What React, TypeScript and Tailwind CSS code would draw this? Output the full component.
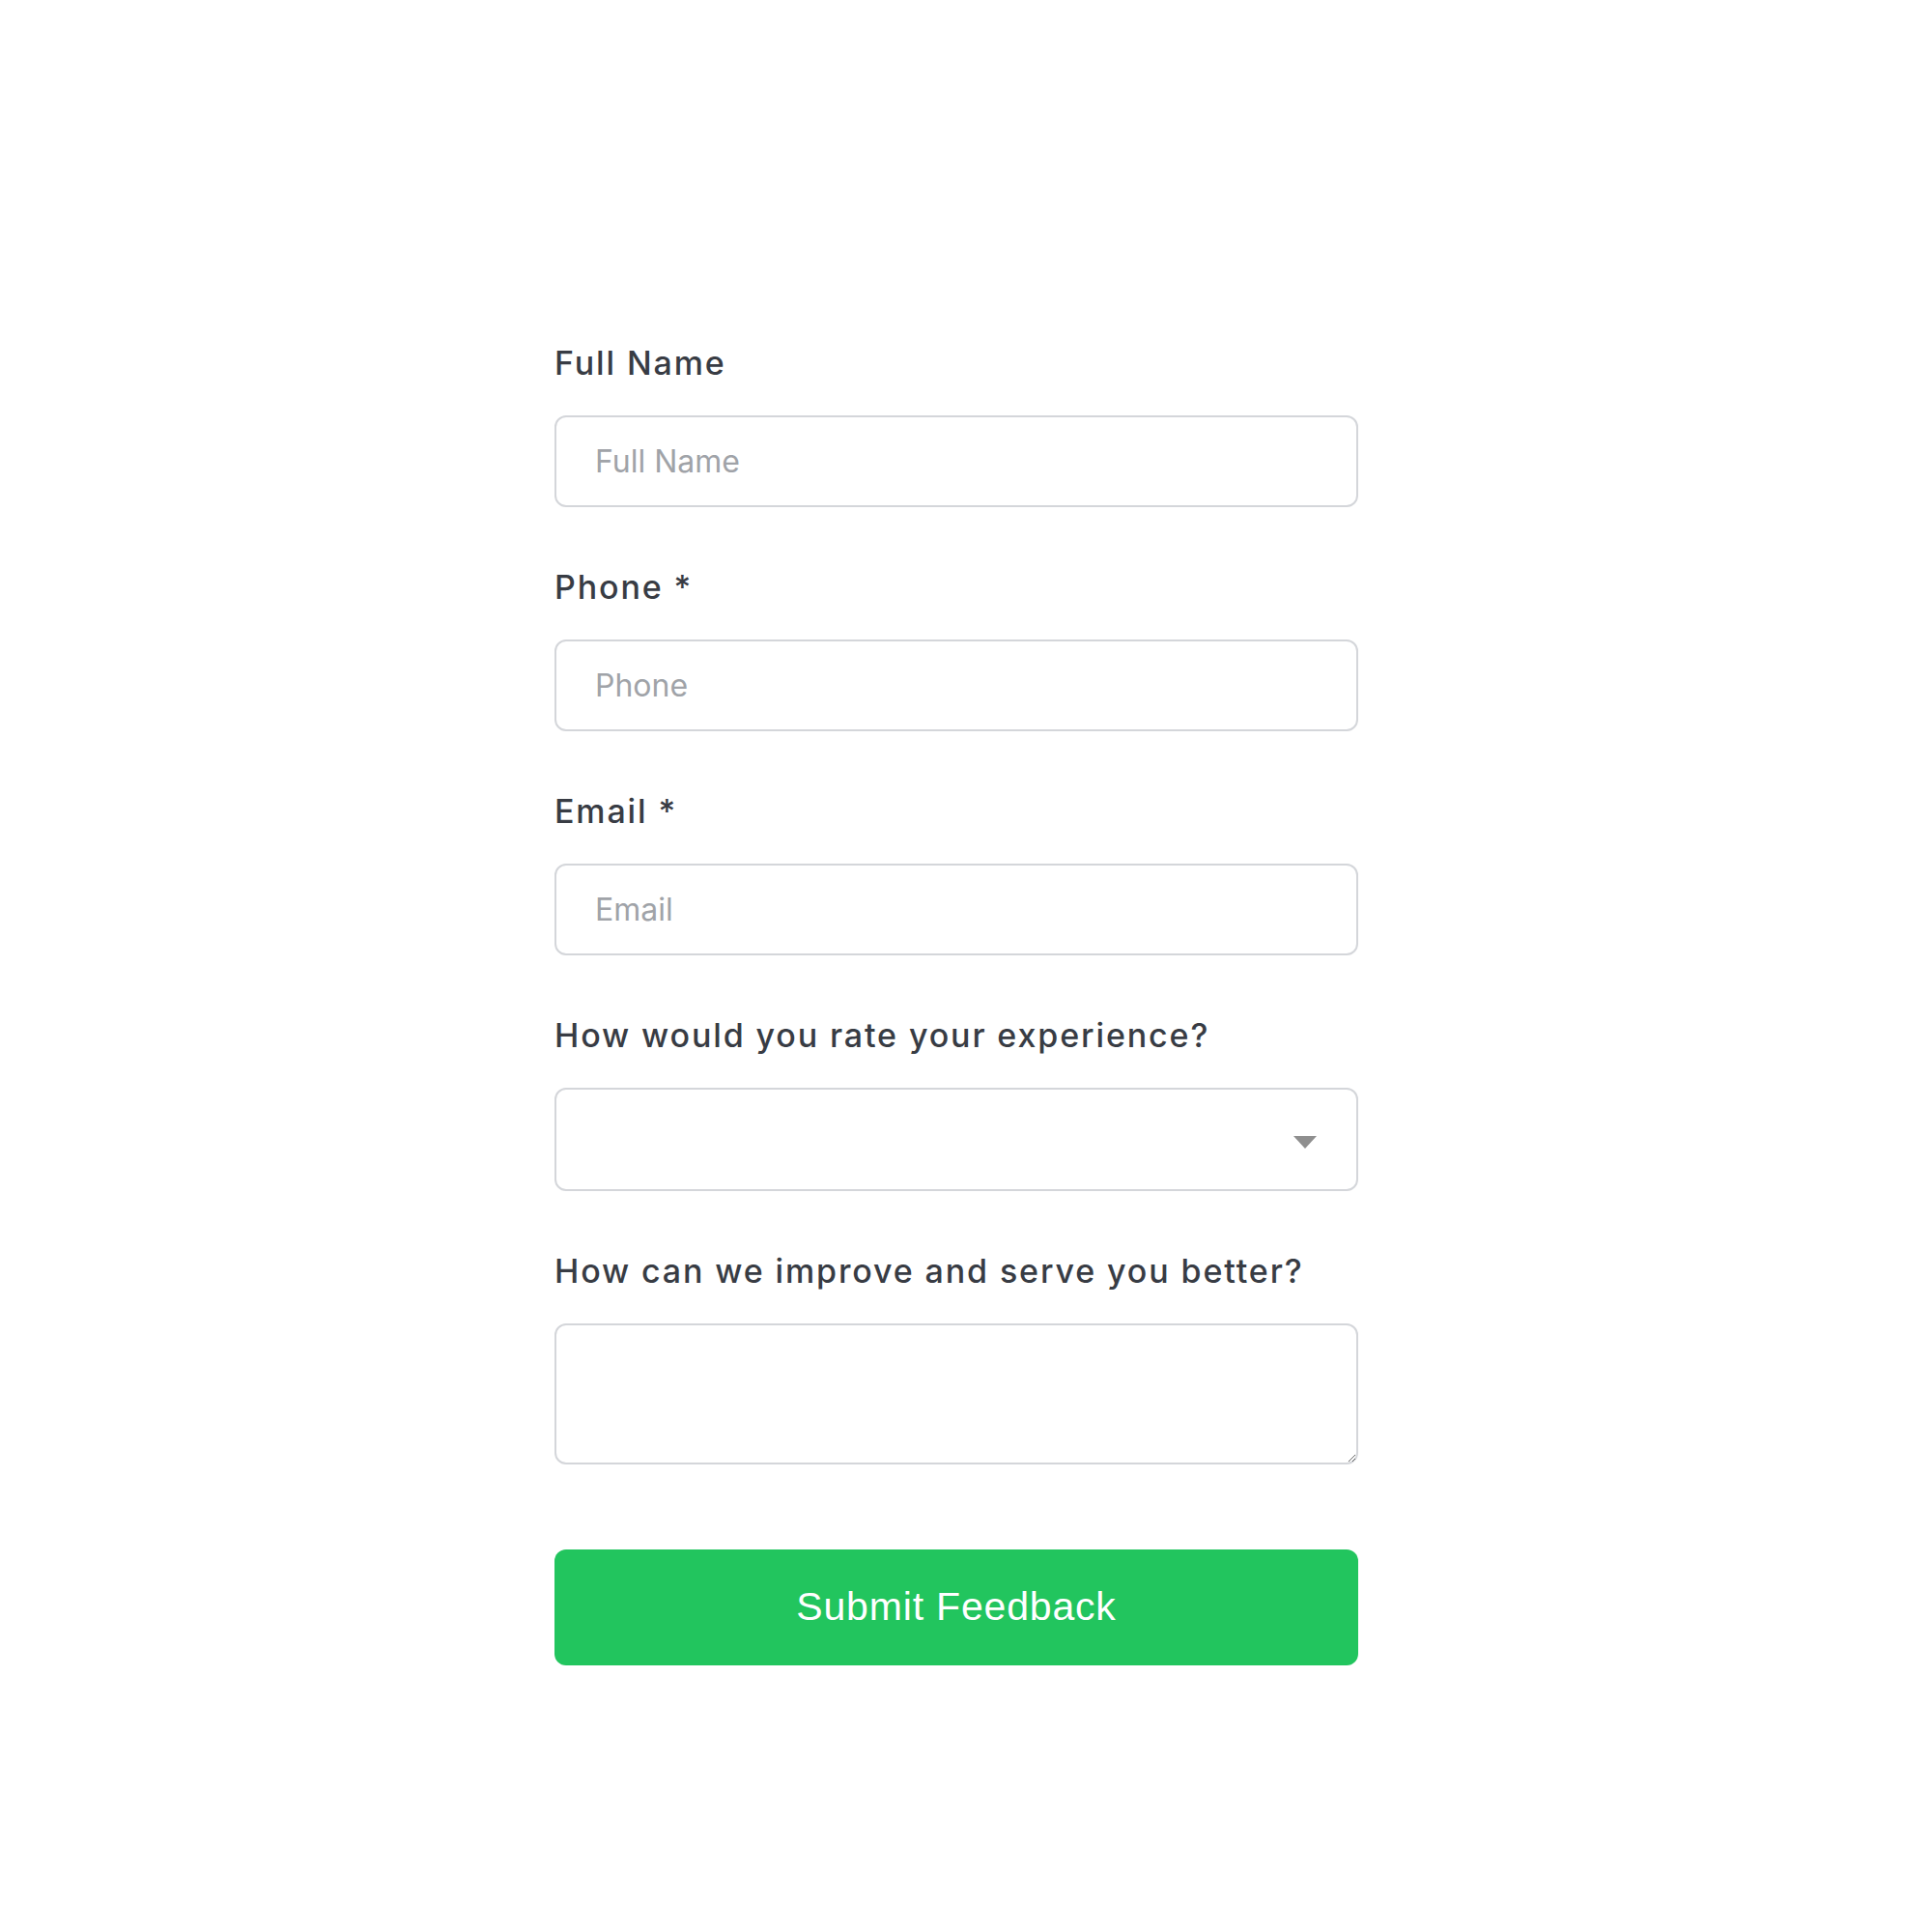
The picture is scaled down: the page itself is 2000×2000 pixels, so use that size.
import { useState } from 'react'

const fields = [
  { id: 'fullName', label: 'Full Name', placeholder: 'Full Name', type: 'text' },
  { id: 'phone', label: 'Phone *', placeholder: 'Phone', type: 'tel' },
  { id: 'email', label: 'Email *', placeholder: 'Email', type: 'email' },
]

const labelClass =
  "block font-['Inter',sans-serif] font-medium text-[34px] tracking-[0.055em] leading-[49px] text-[#383c44] mb-[30px]"

export default function App() {
  const [rating, setRating] = useState('')
  const [comment, setComment] = useState('')

  return (
    <div className="min-h-screen w-full bg-white flex justify-center pr-[20px]">
      <form
        className="w-[832px] pt-[351px] flex flex-col gap-[58px]"
        onSubmit={(e) => e.preventDefault()}
      >
        {fields.map((f) => (
          <div key={f.id}>
            <label htmlFor={f.id} className={labelClass}>
              {f.label}
            </label>
            <input
              id={f.id}
              type={f.type}
              placeholder={f.placeholder}
              className="block w-full h-[95px] px-[40px] border-2 border-[#d4d6da] rounded-[12px] bg-white font-['Inter',sans-serif] text-[32px] text-[#374151] placeholder:text-[#a0a3a8] outline-none"
            />
          </div>
        ))}

        {/* Rating select */}
        <div>
          <label htmlFor="rating" className={labelClass}>
            How would you rate your experience?
          </label>
          <div className="relative">
            <select
              id="rating"
              value={rating}
              onChange={(e) => setRating(e.target.value)}
              className="block w-full h-[107px] px-[40px] border-2 border-[#d4d6da] rounded-[12px] bg-white appearance-none font-['Inter',sans-serif] text-[32px] text-[#374151] outline-none"
            >
              <option value=""></option>
              <option value="5">Excellent</option>
              <option value="4">Good</option>
              <option value="3">Average</option>
              <option value="2">Poor</option>
              <option value="1">Very Poor</option>
            </select>
            <svg
              className="pointer-events-none absolute right-[43px] top-[50px]"
              width="24"
              height="13"
              viewBox="0 0 24 13"
            >
              <path d="M0 0 L24 0 L12 13 Z" fill="#8f8f8f" />
            </svg>
          </div>
        </div>

        {/* Comments */}
        <div>
          <label htmlFor="comment" className={labelClass}>
            How can we improve and serve you better?
          </label>
          <textarea
            id="comment"
            value={comment}
            onChange={(e) => setComment(e.target.value)}
            className="block w-full h-[146px] px-[40px] py-[20px] border-2 border-[#d4d6da] rounded-[12px] bg-white font-['Inter',sans-serif] text-[32px] text-[#374151] outline-none"
          />
        </div>

        <button
          type="submit"
          className="mt-[30px] h-[120px] w-full rounded-[12px] bg-[#22c55e] text-white font-['Liberation_Sans',Arial,sans-serif] text-[41px] tracking-[0.02em]"
        >
          Submit Feedback
        </button>
      </form>
    </div>
  )
}
